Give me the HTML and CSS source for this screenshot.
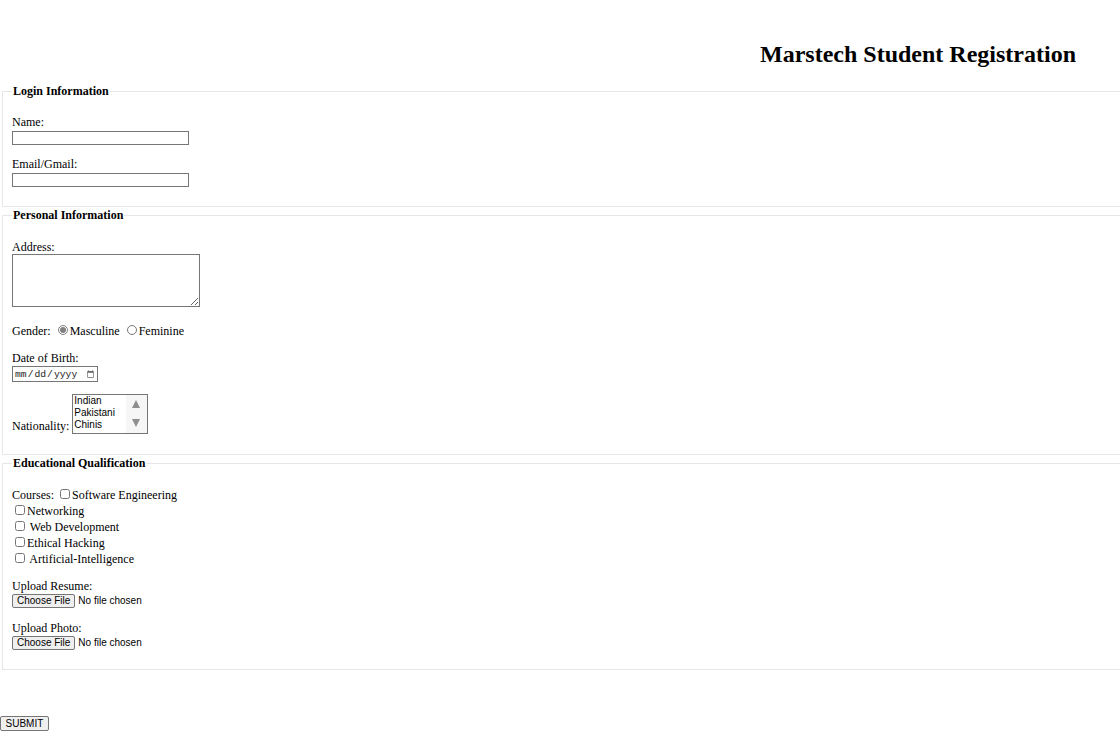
FILE: index.html
```html
<!DOCTYPE html>
<html lang="en">
<head>
<meta charset="utf-8">
<title>Marstech Student Registration</title>
<link rel="stylesheet" href="styles.css">
</head>
<body>
<h1 class="title">Marstech Student Registration</h1>
<form class="reg-form">
  <fieldset class="group group-login">
    <legend class="group-title">Login Information</legend>
    <div class="field">
      <label class="field-label" for="name">Name:</label>
      <input class="text-input" id="name" type="text">
    </div>
    <div class="field">
      <label class="field-label" for="email">Email/Gmail:</label>
      <input class="text-input" id="email" type="email">
    </div>
  </fieldset>

  <fieldset class="group group-personal">
    <legend class="group-title">Personal Information</legend>
    <div class="field">
      <label class="field-label" for="address">Address:</label>
      <textarea class="text-area" id="address"></textarea>
    </div>
    <div class="field field-gender">
      Gender: <input class="radio" type="radio" name="gender" checked>Masculine <input class="radio" type="radio" name="gender">Feminine
    </div>
    <div class="field field-date">
      <label class="field-label" for="dob">Date of Birth:</label>
      <input class="date-input" id="dob" type="date">
    </div>
    <div class="field field-nat">
      <label class="nat-label" for="nat">Nationality:</label>
      <div class="listbox">
        <select class="nat-select" id="nat" size="3">
          <option>Indian</option>
          <option>Pakistani</option>
          <option>Chinis</option>
        </select>
        <span class="listbox-bar" aria-hidden="true">
          <span class="arrow arrow-up"></span>
          <span class="arrow arrow-down"></span>
        </span>
      </div>
    </div>
  </fieldset>

  <fieldset class="group group-edu">
    <legend class="group-title">Educational Qualification</legend>
    <div class="courses">
      <div class="check-row">Courses: <input class="check" type="checkbox">Software Engineering</div>
      <div class="check-row"><input class="check" type="checkbox">Networking</div>
      <div class="check-row"><input class="check" type="checkbox"> Web Development</div>
      <div class="check-row"><input class="check" type="checkbox">Ethical Hacking</div>
      <div class="check-row"><input class="check" type="checkbox"> Artificial-Intelligence</div>
    </div>
    <div class="field field-upload">
      <label class="field-label" for="resume">Upload Resume:</label>
      <input class="file-input" id="resume" type="file">
    </div>
    <div class="field field-upload2">
      <label class="field-label" for="photo">Upload Photo:</label>
      <input class="file-input" id="photo" type="file">
    </div>
  </fieldset>

  <div class="actions">
    <button class="submit-btn" type="submit">SUBMIT</button>
  </div>
</form>
</body>
</html>
```
FILE: styles.css
```css
html, body {
  margin: 0;
  padding: 0;
  background: #ffffff;
}

body {
  font-family: "Liberation Serif", "Times New Roman", serif;
  font-size: 12px;
  line-height: 14px;
  color: #000000;
}

.title {
  margin: 40px 0 16px 0;
  padding-right: 44px;
  font-size: 24px;
  line-height: 28px;
  font-weight: bold;
  text-align: right;
}

.reg-form {
  margin: 0;
}

.group {
  margin: 0 0 1px 2px;
  padding: 5px 9px 19px 9px;
  border: 1px solid #e6e6e6;
  border-right: none;
  min-width: 0;
}

.group-personal {
  padding-bottom: 20px;
}

.group-title {
  padding: 0 1px;
  font-weight: bold;
  font-size: 12px;
  line-height: 14px;
}

.field {
  margin-top: 13px;
}

.group-login .field {
  margin-top: 12px;
}

.group-login .text-input {
  margin-top: 2px;
}

.field-label {
  display: block;
}

.text-input {
  display: block;
  box-sizing: border-box;
  width: 177px;
  height: 14px;
  margin: 1px 0 0 0;
  padding: 0 2px;
  border: 1px solid #767676;
  border-radius: 0;
  font-family: "Liberation Sans", Arial, sans-serif;
  font-size: 10px;
  background: #ffffff;
}

.text-area {
  display: block;
  box-sizing: border-box;
  width: 188px;
  height: 53px;
  margin: 0;
  padding: 1px;
  border: 1px solid #767676;
  border-radius: 0;
  font-family: "Liberation Mono", monospace;
  font-size: 10px;
}

.field-gender {
  margin-top: 17px;
}

.radio {
  width: 10px;
  height: 10px;
  margin: 0 2px 0 4px;
  vertical-align: baseline;
  accent-color: #808080;
}

.date-input {
  display: block;
  box-sizing: border-box;
  width: 86px;
  height: 16px;
  margin: 1px 0 0 0;
  padding: 0 1px;
  border: 1px solid #767676;
  border-radius: 0;
  font-family: "Liberation Mono", "DejaVu Sans Mono", monospace;
  font-size: 9.7px;
  color: #1a1a1a;
  background: #ffffff;
}

.date-input::-webkit-datetime-edit {
  padding: 0;
}

.date-input::-webkit-datetime-edit-fields-wrapper {
  padding: 0;
}

.date-input::-webkit-calendar-picker-indicator {
  width: 9px;
  height: 9px;
  padding: 0;
  margin: 0 1px 0 0;
  opacity: 0.6;
}

.field-nat {
  display: flex;
  align-items: flex-end;
  margin-top: 12px;
}

.nat-label {
  margin: 0 3px 1px 0;
}

.listbox {
  display: flex;
  box-sizing: border-box;
  width: 76px;
  height: 40px;
  border: 1px solid #767676;
  background: #ffffff;
}

.nat-select {
  box-sizing: border-box;
  width: 53px;
  height: 38px;
  margin: 0;
  padding: 0;
  border: none;
  border-radius: 0;
  outline: none;
  overflow: hidden;
  font-family: "Liberation Sans", Arial, sans-serif;
  font-size: 10px;
  color: #000000;
  background: #ffffff;
}

.nat-select option {
  padding: 0 1px;
}

.listbox-bar {
  display: flex;
  flex-direction: column;
  justify-content: space-between;
  align-items: center;
  box-sizing: border-box;
  width: 21px;
  height: 38px;
  padding: 5px 1px 6px 0;
  background: #f6f6f6;
}

.arrow {
  display: block;
  width: 0;
  height: 0;
  border-left: 4.5px solid transparent;
  border-right: 4.5px solid transparent;
}

.arrow-up {
  border-bottom: 8px solid #8e8e8e;
}

.arrow-down {
  border-top: 8px solid #8e8e8e;
}

.courses {
  margin-top: 12px;
}

.check-row {
  line-height: 16px;
}

.check {
  width: 10px;
  height: 10px;
  margin: 0 2px 1px 3px;
  vertical-align: baseline;
}

.field-upload {
  margin-top: 12px;
}

.file-input {
  display: block;
  height: 14px;
  margin: 1px 0 0 0;
  padding: 0;
  font-family: "Liberation Sans", Arial, sans-serif;
  font-size: 10px;
  line-height: 14px;
  color: #000000;
}

.file-input::file-selector-button {
  box-sizing: border-box;
  height: 14px;
  margin: 0 3px 0 0;
  padding: 0 4px;
  border: 1px solid #767676;
  border-radius: 2px;
  background: #efefef;
  color: #000000;
  font: inherit;
  line-height: 12px;
}

.actions {
  margin-top: 46px;
}

.submit-btn {
  display: block;
  box-sizing: border-box;
  height: 15px;
  margin: 0;
  padding: 0 4.5px;
  border: 1px solid #767676;
  border-radius: 2px;
  background: #efefef;
  color: #000000;
  font-family: "Liberation Sans", Arial, sans-serif;
  font-size: 10px;
  line-height: 13px;
}
```
